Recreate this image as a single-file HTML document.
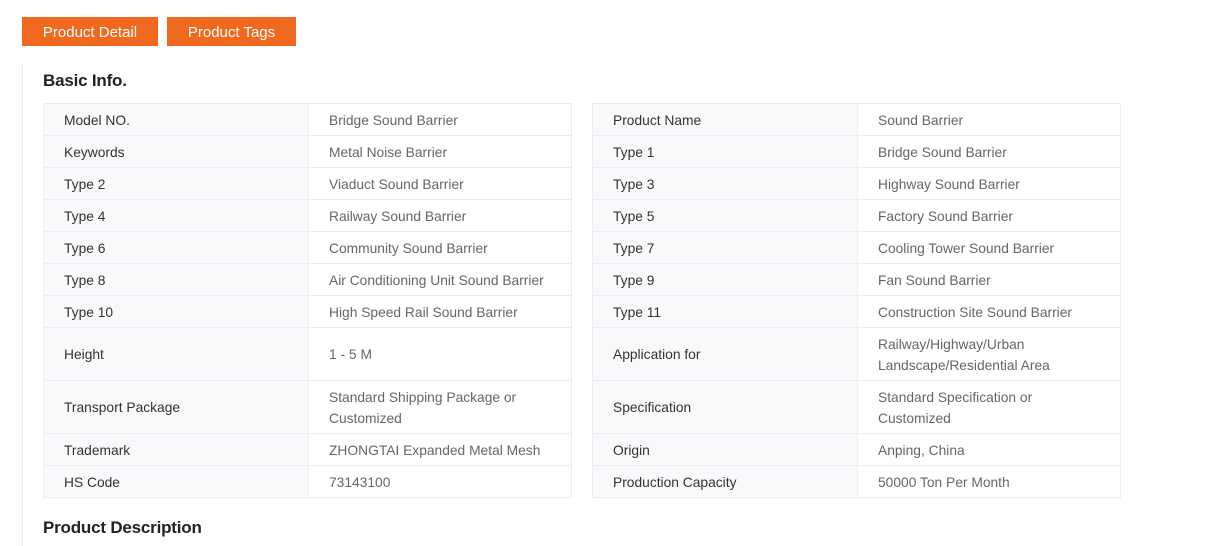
<!DOCTYPE html>
<html><head><meta charset="utf-8"><style>
body{margin:0;background:#fff;font-family:"Liberation Sans",Arial,sans-serif;width:1222px;height:546px;overflow:hidden;position:relative}
.btn{position:absolute;top:17px;height:29px;background:#f0691e;color:#fff;font-size:15px;line-height:31px;text-align:center}
.vline{position:absolute;left:22px;top:64px;width:1px;height:482px;background:#eceef0}
h2{position:absolute;left:43px;margin:0;font-size:17px;font-weight:bold;color:#222;letter-spacing:-0.2px}
table{position:absolute;top:103px;width:529px;border-collapse:collapse;font-size:13.8px;table-layout:fixed}
td{border:1px solid #ebedf0;padding:1px 20px 0;height:30px;line-height:21px}
td.l{background:#f7f9fb;color:#333;width:224px}
td.v{color:#666}
tr.t td{height:51px}
</style></head><body>
<div class="btn" style="left:22px;width:136px">Product Detail</div>
<div class="btn" style="left:167px;width:129px">Product Tags</div>
<div class="vline"></div>
<h2 style="top:71px">Basic Info.</h2>
<table style="left:43px">
<tr><td class="l">Model NO.</td><td class="v">Bridge Sound Barrier</td></tr>
<tr><td class="l">Keywords</td><td class="v">Metal Noise Barrier</td></tr>
<tr><td class="l">Type 2</td><td class="v">Viaduct Sound Barrier</td></tr>
<tr><td class="l">Type 4</td><td class="v">Railway Sound Barrier</td></tr>
<tr><td class="l">Type 6</td><td class="v">Community Sound Barrier</td></tr>
<tr><td class="l">Type 8</td><td class="v">Air Conditioning Unit Sound Barrier</td></tr>
<tr><td class="l">Type 10</td><td class="v">High Speed Rail Sound Barrier</td></tr>
<tr class="t"><td class="l">Height</td><td class="v">1 - 5 M</td></tr>
<tr class="t"><td class="l">Transport Package</td><td class="v">Standard Shipping Package or Customized</td></tr>
<tr><td class="l">Trademark</td><td class="v">ZHONGTAI Expanded Metal Mesh</td></tr>
<tr><td class="l">HS Code</td><td class="v">73143100</td></tr>
</table>
<table style="left:592px">
<tr><td class="l">Product Name</td><td class="v">Sound Barrier</td></tr>
<tr><td class="l">Type 1</td><td class="v">Bridge Sound Barrier</td></tr>
<tr><td class="l">Type 3</td><td class="v">Highway Sound Barrier</td></tr>
<tr><td class="l">Type 5</td><td class="v">Factory Sound Barrier</td></tr>
<tr><td class="l">Type 7</td><td class="v">Cooling Tower Sound Barrier</td></tr>
<tr><td class="l">Type 9</td><td class="v">Fan Sound Barrier</td></tr>
<tr><td class="l">Type 11</td><td class="v">Construction Site Sound Barrier</td></tr>
<tr class="t"><td class="l">Application for</td><td class="v">Railway/Highway/Urban Landscape/Residential Area</td></tr>
<tr class="t"><td class="l">Specification</td><td class="v">Standard Specification or Customized</td></tr>
<tr><td class="l">Origin</td><td class="v">Anping, China</td></tr>
<tr><td class="l">Production Capacity</td><td class="v">50000 Ton Per Month</td></tr>
</table>
<h2 style="top:518px">Product Description</h2>
</body></html>
